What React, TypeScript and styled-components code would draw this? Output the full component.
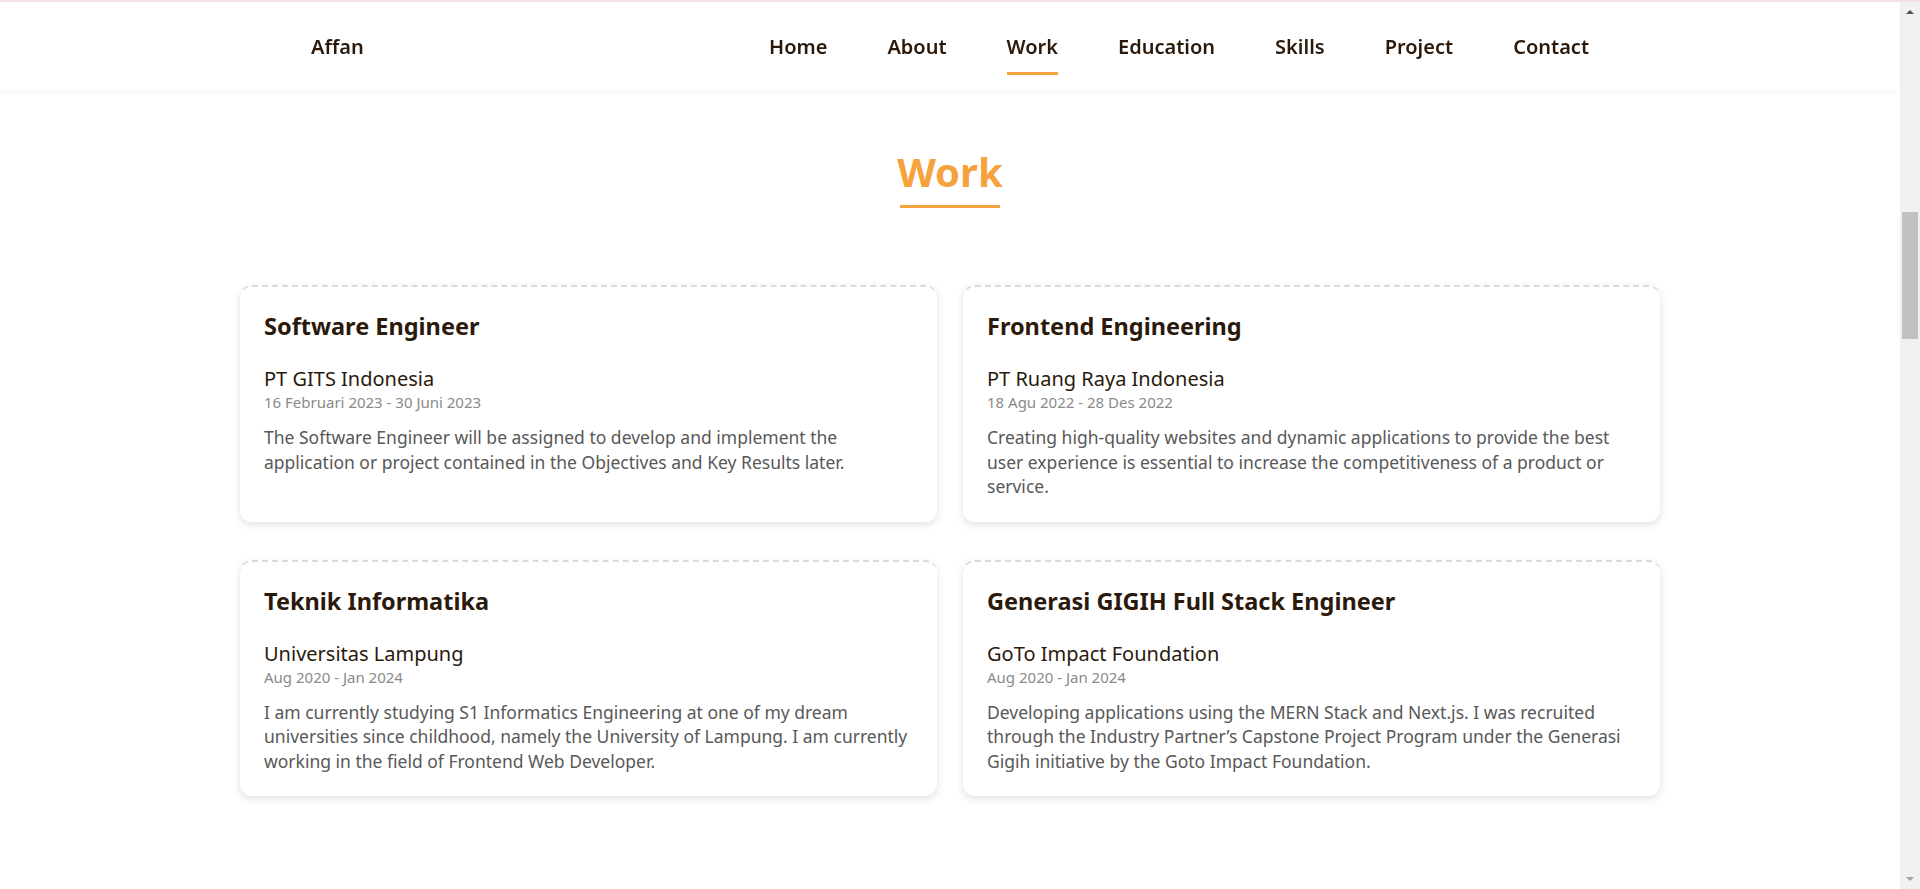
import React from "react";
import styled, { createGlobalStyle } from "styled-components";

const GlobalStyle = createGlobalStyle`
  body {
    margin: 0;
    background: #ffffff;
    font-family: "Noto Sans", "Open Sans", sans-serif;
    color: #2b1a0c;
    border-top: 2px solid #f7e1e6;
  }
  * { box-sizing: border-box; }
`;

const Page = styled.div`
  margin-right: 20px;
`;

const ScrollTrack = styled.div`
  position: fixed;
  top: 2px;
  right: 0;
  bottom: 0;
  width: 20px;
  background: #f1f1f1;
  display: flex;
  flex-direction: column;
  align-items: center;
`;

const ArrowBtn = styled.div<{ $down?: boolean }>`
  height: 20px;
  width: 100%;
  display: flex;
  align-items: center;
  justify-content: center;
  margin-top: ${(p) => (p.$down ? "auto" : "0")};
  &::before {
    content: "";
    border-left: 4px solid transparent;
    border-right: 4px solid transparent;
    ${(p) =>
      p.$down
        ? "border-top: 4px solid #a3a3a3;"
        : "border-bottom: 4px solid #505050;"}
  }
`;

const Thumb = styled.div`
  margin-top: 190px;
  width: 16px;
  height: 127px;
  background: #c1c1c1;
`;

const NavBar = styled.header`
  position: sticky;
  top: 0;
  z-index: 10;
  height: 88px;
  background: #ffffff;
  box-shadow: 0 2px 6px rgba(0, 0, 0, 0.05);
`;

const NavInner = styled.nav`
  max-width: 1280px;
  height: 100%;
  margin: 0 auto;
  padding-left: 1px;
  display: flex;
  align-items: center;
  justify-content: space-between;
`;

const Brand = styled.a`
  font-size: 20px;
  font-weight: 600;
  color: #2b1a0c;
  text-decoration: none;
`;

const NavList = styled.ul`
  display: flex;
  gap: 60px;
  list-style: none;
  margin: 0;
  padding: 0 1px 0 0;
`;

const NavLink = styled.a<{ $active?: boolean }>`
  position: relative;
  font-size: 20px;
  font-weight: 600;
  color: #2b1a0c;
  text-decoration: none;
  &::after {
    content: "";
    display: ${(p) => (p.$active ? "block" : "none")};
    position: absolute;
    left: 0;
    right: 0;
    bottom: -15px;
    height: 3px;
    background: #f6a23e;
  }
`;

const Section = styled.section`
  padding: 54px 0 80px;
`;

const Heading = styled.div`
  display: flex;
  flex-direction: column;
  align-items: center;
  gap: 6px;
`;

const Title = styled.h2`
  margin: 0;
  font-size: 40px;
  font-weight: 700;
  color: #f6a23e;
  line-height: normal;
`;

const TitleBar = styled.span`
  width: 100px;
  height: 3px;
  background: #f6a23e;
`;

const Grid = styled.div`
  max-width: 1420px;
  margin: 77px auto 0;
  display: grid;
  grid-template-columns: 1fr 1fr;
  column-gap: 26px;
  row-gap: 38px;
`;

const Card = styled.article`
  padding: 23px 24px 23px;
  border-top: 2px dashed #dadada;
  border-radius: 12px;
  background: #ffffff;
  box-shadow: 0 3px 8px rgba(0, 0, 0, 0.12);
`;

const Role = styled.h3`
  margin: 0 0 24px;
  font-size: 23.5px;
  font-weight: 700;
  line-height: 32px;
  color: #2b1a0c;
`;

const Company = styled.div`
  font-size: 20px;
  color: #2b1a0c;
  line-height: 26px;
`;

const Period = styled.div`
  font-size: 15px;
  color: #8a8a8a;
  line-height: 20px;
`;

const Desc = styled.p`
  margin: 13px 0 0;
  font-size: 17.5px;
  line-height: 24.5px;
  color: #585858;
`;

const navItems = ["Home", "About", "Work", "Education", "Skills", "Project", "Contact"];

const jobs = [
  {
    role: "Software Engineer",
    company: "PT GITS Indonesia",
    period: "16 Februari 2023 - 30 Juni 2023",
    desc: "The Software Engineer will be assigned to develop and implement the application or project contained in the Objectives and Key Results later.",
  },
  {
    role: "Frontend Engineering",
    company: "PT Ruang Raya Indonesia",
    period: "18 Agu 2022 - 28 Des 2022",
    desc: "Creating high-quality websites and dynamic applications to provide the best user experience is essential to increase the competitiveness of a product or service.",
  },
  {
    role: "Teknik Informatika",
    company: "Universitas Lampung",
    period: "Aug 2020 - Jan 2024",
    desc: "I am currently studying S1 Informatics Engineering at one of my dream universities since childhood, namely the University of Lampung. I am currently working in the field of Frontend Web Developer.",
  },
  {
    role: "Generasi GIGIH Full Stack Engineer",
    company: "GoTo Impact Foundation",
    period: "Aug 2020 - Jan 2024",
    desc: "Developing applications using the MERN Stack and Next.js. I was recruited through the Industry Partner\u2019s Capstone Project Program under the Generasi Gigih initiative by the Goto Impact Foundation.",
  },
];

export default function App() {
  return (
    <>
      <GlobalStyle />
      <Page>
        <NavBar>
          <NavInner>
            <Brand href="#">Affan</Brand>
            <NavList>
              {navItems.map((item) => (
                <li key={item}>
                  <NavLink href="#" $active={item === "Work"}>
                    {item}
                  </NavLink>
                </li>
              ))}
            </NavList>
          </NavInner>
        </NavBar>
        <Section>
          <Heading>
            <Title>Work</Title>
            <TitleBar />
          </Heading>
          <Grid>
            {jobs.map((j) => (
              <Card key={j.role}>
                <Role>{j.role}</Role>
                <Company>{j.company}</Company>
                <Period>{j.period}</Period>
                <Desc>{j.desc}</Desc>
              </Card>
            ))}
          </Grid>
        </Section>
      </Page>
      <ScrollTrack aria-hidden="true">
        <ArrowBtn />
        <Thumb />
        <ArrowBtn $down />
      </ScrollTrack>
    </>
  );
}
